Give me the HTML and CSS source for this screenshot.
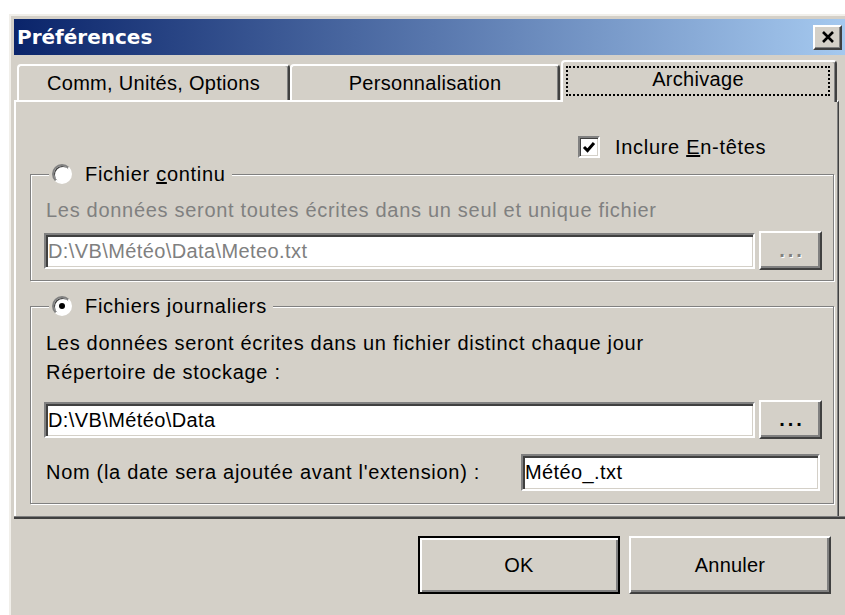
FILE: index.html
```html
<!DOCTYPE html>
<html lang="fr">
<head>
<meta charset="utf-8">
<title>Préférences</title>
<link rel="stylesheet" href="styles.css">
</head>
<body>
<div class="window">
  <div class="titlebar">
    <span class="title">Préférences</span>
    <button class="close" aria-label="Fermer">
      <svg width="14" height="12" viewBox="0 0 14 12"><path d="M2 1 L12 11 M12 1 L2 11" stroke="#000" stroke-width="2.6" fill="none"/></svg>
    </button>
  </div>

  <div class="tabs">
    <div class="tab t1">Comm, Unités, Options</div>
    <div class="tab t2">Personnalisation</div>
    <div class="tab active"><span class="focus">Archivage</span></div>
  </div>

  <div class="panel">
    <div class="check-row">
      <span class="checkbox">
        <svg width="14" height="14" viewBox="0 0 14 14"><polyline points="2,7 5.5,10.5 12,3" stroke="#000" stroke-width="3" fill="none"/></svg>
      </span>
      <span class="check-label">Inclure <u>E</u>n-têtes</span>
    </div>

    <div class="group g1">
      <div class="legend"><span class="radio"></span><span class="legend-text">Fichier <u>c</u>ontinu</span></div>
      <div class="line disabled t-first">Les données seront toutes écrites dans un seul et unique fichier</div>
      <div class="path-row r1">
        <div class="field disabled">D:\VB\Météo\Data\Meteo.txt</div>
        <button class="browse disabled">...</button>
      </div>
    </div>

    <div class="group g2">
      <div class="legend"><span class="radio checked"></span><span class="legend-text">Fichiers journaliers</span></div>
      <div class="line t-first2">Les données seront écrites dans un fichier distinct chaque jour</div>
      <div class="line t-second">Répertoire de stockage :</div>
      <div class="path-row r2">
        <div class="field">D:\VB\Météo\Data</div>
        <button class="browse">...</button>
      </div>
      <div class="name-row">
        <span class="name-label">Nom (la date sera ajoutée avant l'extension) :</span>
        <div class="field name-field">Météo_.txt</div>
      </div>
    </div>
  </div>
  <div class="sep"></div>

  <div class="actions">
    <button class="btn default">OK</button>
    <button class="btn">Annuler</button>
  </div>
</div>
</body>
</html>
```

FILE: styles.css
```css
* { box-sizing: border-box; }

html, body {
  margin: 0;
  height: 100%;
  overflow: hidden;
  background: #fff;
}

body {
  font-family: "Liberation Sans", Arial, sans-serif;
  font-size: 20px;
  letter-spacing: 0.7px;
  color: #000;
}

button {
  font: inherit;
  letter-spacing: inherit;
  color: inherit;
  padding: 0;
  margin: 0;
}

/* dialog frame */
.window {
  margin: 14px 0 0 9px;
  width: 843px;
  height: 620px;
  background: #d4d0c8;
  border-top: 2px solid #f1efea;
  border-left: 2px solid #f1efea;
  padding: 3px 0 0 3px;
}

.titlebar {
  height: 36px;
  display: flex;
  align-items: center;
  justify-content: space-between;
  padding: 0 10px 0 3px;
  background: linear-gradient(to right, #0a246a 0%, #a6caf0 100%);
}

.title {
  color: #fff;
  font-family: "DejaVu Sans", sans-serif;
  font-weight: bold;
  font-size: 20px;
  letter-spacing: 0;
}

.close {
  width: 29px;
  height: 25px;
  background: #d4d0c8;
  border: 2px solid;
  border-color: #fff #404040 #404040 #fff;
  box-shadow: inset -1px -1px #808080;
  display: flex;
  align-items: center;
  justify-content: center;
}

/* tab strip */
.tabs {
  display: flex;
  align-items: flex-end;
  height: 45px;
  padding-left: 3px;
  letter-spacing: 0.3px;
}

.tab {
  height: 36px;
  display: flex;
  align-items: center;
  justify-content: center;
  background: #d4d0c8;
  border-top: 2px solid #fff;
  border-left: 2px solid #fff;
  border-right: 2px solid #404040;
  box-shadow: inset -1px 0 #808080;
  border-radius: 4px 4px 0 0;
}

.t1 { width: 273px; }
.t2 { width: 270px; }

.tab.active {
  width: 276px;
  height: 42px;
  margin-left: 1px;
  margin-bottom: -2px;
  position: relative;
  z-index: 1;
  padding: 4px 5px 6px 3px;
  align-items: stretch;
}

.focus {
  flex: 1;
  display: flex;
  align-items: center;
  justify-content: center;
  padding-bottom: 3px;
  border: 2px dotted #000;
}

/* tab page */
.panel {
  margin-right: 13px;
  border-top: 2px solid #fff;
  border-left: 2px solid #fff;
  border-right: 1px solid #404040;
  box-shadow: inset -1px 0 #808080;
  padding: 34px 0 12px 0;
}

.check-row {
  display: flex;
  align-items: center;
  height: 22px;
  padding-left: 562px;
}

.checkbox {
  width: 22px;
  height: 22px;
  background: #fff;
  border: 2px solid;
  border-color: #808080 #fff #fff #808080;
  box-shadow: inset 1px 1px #404040, inset -1px -1px #d4d0c8;
  display: flex;
  align-items: center;
  justify-content: center;
}

.check-label { margin-left: 15px; }

/* etched group boxes */
.group {
  margin: 0 4px 0 14px;
  border: 1px solid #808080;
  box-shadow: inset 1px 1px #fff, 1px 1px #fff;
  padding: 0 11px 0 13px;
}

.g1 { margin-top: 16px; padding-bottom: 10px; }
.g2 { margin-top: 25px; padding-bottom: 12px; }

.legend {
  display: flex;
  align-items: center;
  width: fit-content;
  height: 22px;
  margin: -12px 0 0 5px;
  padding: 0 6px 0 3px;
  background: #d4d0c8;
}

.legend-text { margin-left: 13px; line-height: 22px; }

.radio {
  width: 20px;
  height: 20px;
  border-radius: 50%;
  background: #fff;
  border: 2px solid;
  border-color: #808080 #fff #fff #808080;
  box-shadow: inset 1px 1px #404040;
  display: flex;
  align-items: center;
  justify-content: center;
}

.radio.checked::after {
  content: "";
  width: 6px;
  height: 6px;
  border-radius: 50%;
  background: #000;
}

.line {
  line-height: 24px;
  padding-left: 2px;
}

.disabled { color: #808080; }

.t-first { margin-top: 13px; }
.t-first2 { margin-top: 14px; }
.t-second { margin-top: 5px; }

.path-row {
  display: flex;
  align-items: center;
  gap: 4px;
  height: 39px;
}

.r1 { margin-top: 9px; }
.r2 { margin-top: 16px; }

.field {
  flex: 1;
  height: 36px;
  background: #fff;
  border: 2px solid;
  border-color: #808080 #fff #fff #808080;
  box-shadow: inset 2px 2px #404040, inset -1px -1px #d4d0c8;
  padding-left: 2px;
  line-height: 32px;
  letter-spacing: 0.4px;
  white-space: nowrap;
}

.field.disabled { color: #808080; }

.browse {
  width: 63px;
  height: 39px;
  background: #d4d0c8;
  border: 2px solid;
  border-color: #fff #404040 #404040 #fff;
  box-shadow: inset -2px -2px #808080;
  font-weight: bold;
  letter-spacing: 3px;
  padding-left: 3px;
}

.browse.disabled {
  color: #808080;
  text-shadow: 1px 1px #fff;
}

.name-row {
  display: flex;
  align-items: center;
  justify-content: space-between;
  height: 37px;
  margin-top: 15px;
}

.name-label { padding-left: 2px; }

.name-field {
  flex: none;
  width: 299px;
  height: 37px;
  margin-right: 2px;
  line-height: 33px;
}

/* separator under the tab page */
.sep {
  height: 3px;
  background: #404040;
  border-top: 1px solid #808080;
}

.actions {
  display: flex;
  justify-content: flex-end;
  gap: 9px;
  margin-top: 17px;
  padding-right: 21px;
  letter-spacing: 0.2px;
}

.btn {
  width: 202px;
  height: 58px;
  background: #d4d0c8;
  border: 2px solid;
  border-color: #fff #404040 #404040 #fff;
  box-shadow: inset -2px -2px #808080;
}

.btn.default {
  border: 2px solid #000;
  box-shadow: inset 2px 2px #fff, inset -2px -2px #808080;
}
```
